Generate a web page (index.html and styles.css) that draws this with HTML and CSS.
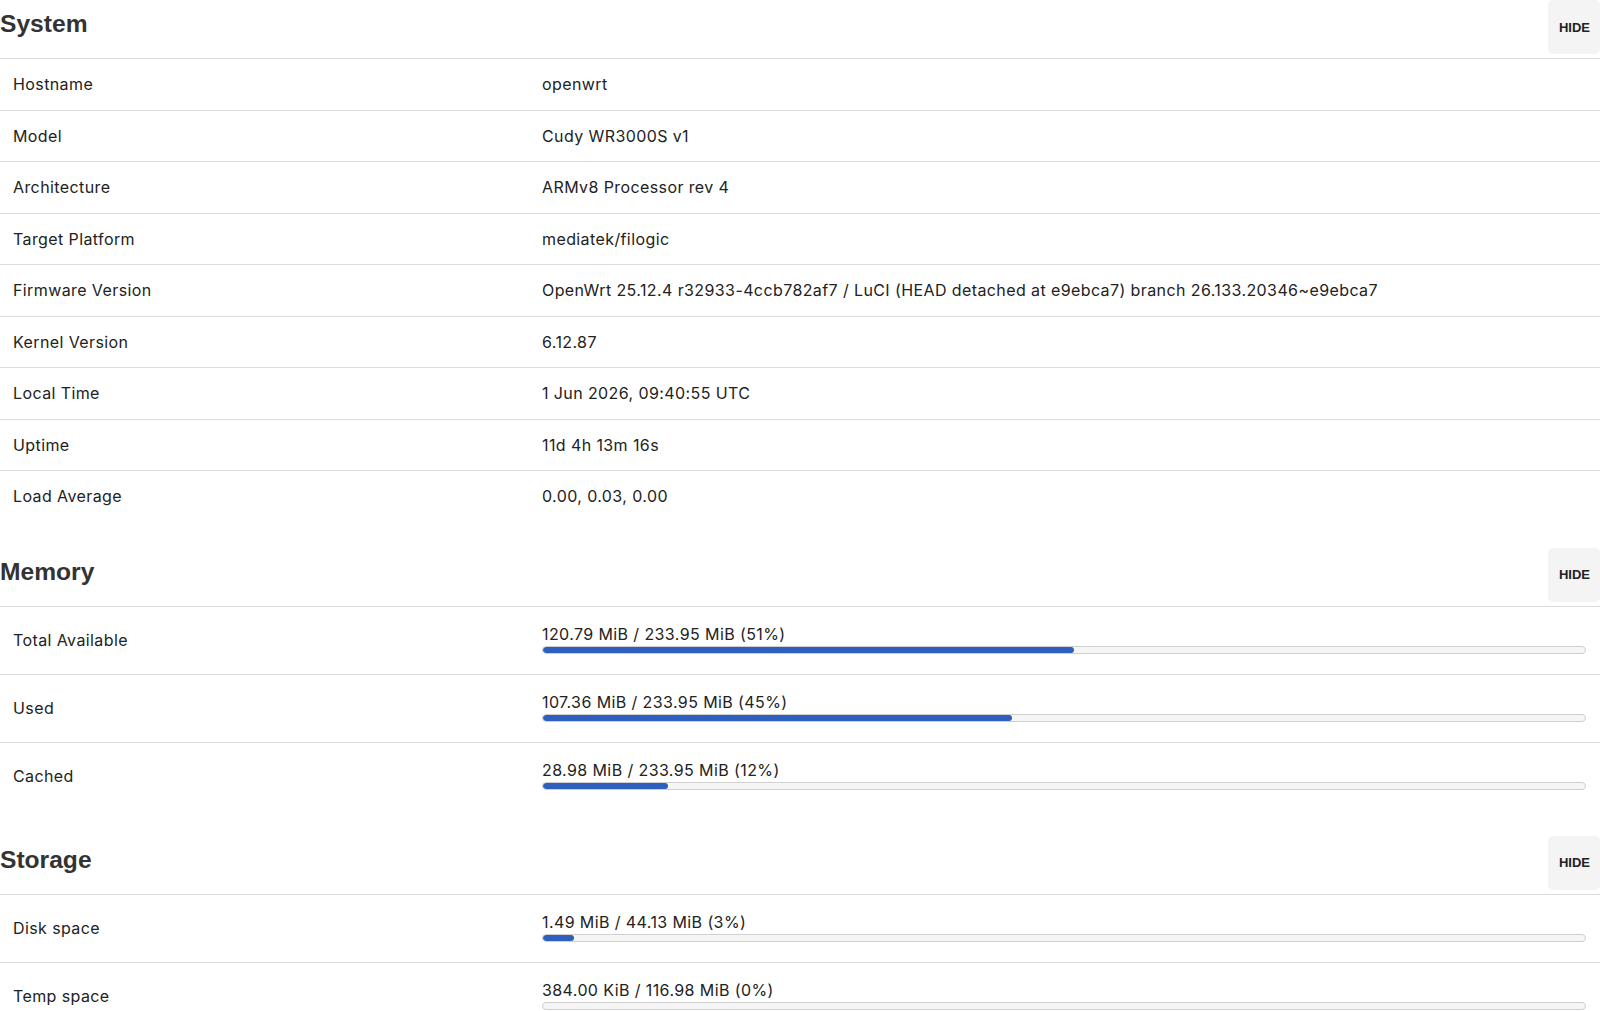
FILE: index.html
```html
<!DOCTYPE html>
<html>
<head>
<meta charset="utf-8">
<title>Status</title>
<link rel="stylesheet" href="styles.css">
</head>
<body>
<div class="page">
  <section class="section">
    <div class="section-head">
      <h2>System</h2>
      <button class="hide-btn">HIDE</button>
    </div>
    <div class="rows">
      <div class="row"><div class="label">Hostname</div><div class="value">openwrt</div></div>
      <div class="row"><div class="label">Model</div><div class="value">Cudy WR3000S v1</div></div>
      <div class="row"><div class="label">Architecture</div><div class="value">ARMv8 Processor rev 4</div></div>
      <div class="row"><div class="label">Target Platform</div><div class="value">mediatek/filogic</div></div>
      <div class="row"><div class="label">Firmware Version</div><div class="value">OpenWrt 25.12.4 r32933-4ccb782af7 / LuCI (HEAD detached at e9ebca7) branch 26.133.20346~e9ebca7</div></div>
      <div class="row"><div class="label">Kernel Version</div><div class="value">6.12.87</div></div>
      <div class="row"><div class="label">Local Time</div><div class="value">1 Jun 2026, 09:40:55 UTC</div></div>
      <div class="row"><div class="label">Uptime</div><div class="value">11d 4h 13m 16s</div></div>
      <div class="row"><div class="label">Load Average</div><div class="value">0.00, 0.03, 0.00</div></div>
    </div>
  </section>

  <section class="section">
    <div class="section-head">
      <h2>Memory</h2>
      <button class="hide-btn">HIDE</button>
    </div>
    <div class="rows">
      <div class="row bar-row"><div class="label">Total Available</div><div class="value"><div class="bar-text">120.79 MiB / 233.95 MiB (51%)</div><div class="track"><div class="fill" style="width:51%"></div></div></div></div>
      <div class="row bar-row"><div class="label">Used</div><div class="value"><div class="bar-text">107.36 MiB / 233.95 MiB (45%)</div><div class="track"><div class="fill" style="width:45%"></div></div></div></div>
      <div class="row bar-row"><div class="label">Cached</div><div class="value"><div class="bar-text">28.98 MiB / 233.95 MiB (12%)</div><div class="track"><div class="fill" style="width:12%"></div></div></div></div>
    </div>
  </section>

  <section class="section">
    <div class="section-head">
      <h2>Storage</h2>
      <button class="hide-btn">HIDE</button>
    </div>
    <div class="rows">
      <div class="row bar-row"><div class="label">Disk space</div><div class="value"><div class="bar-text">1.49 MiB / 44.13 MiB (3%)</div><div class="track"><div class="fill" style="width:3%"></div></div></div></div>
      <div class="row bar-row"><div class="label">Temp space</div><div class="value"><div class="bar-text">384.00 KiB / 116.98 MiB (0%)</div><div class="track"><div class="fill" style="width:0%"></div></div></div></div>
    </div>
  </section>
</div>
</body>
</html>
```

FILE: styles.css
```css
html, body {
  margin: 0;
  padding: 0;
  background: #fff;
}
body {
  font-family: Inter, "Liberation Sans", Arial, sans-serif;
  font-size: 16px;
  letter-spacing: 0.4px;
  color: #222;
}
.page {
  display: flex;
  flex-direction: column;
}
.section + .section {
  margin-top: 26px;
}
.section-head {
  display: flex;
  justify-content: space-between;
  align-items: flex-start;
  padding-bottom: 4px;
  border-bottom: 1px solid #dcdcdc;
}
.section-head h2 {
  margin: 0;
  font-family: "Liberation Sans", Arial, Helvetica, sans-serif;
  font-size: 24.6px;
  font-weight: bold;
  letter-spacing: 0;
  line-height: 47px;
  color: #333;
}
.hide-btn {
  height: 54px;
  padding: 0 10px 0 11px;
  border: none;
  border-radius: 5px;
  background: #f4f4f4;
  color: #222;
  font-family: "Liberation Sans", Arial, Helvetica, sans-serif;
  font-size: 13px;
  font-weight: bold;
  letter-spacing: 0;
}
.rows {
  display: flex;
  flex-direction: column;
}
.row {
  display: grid;
  grid-template-columns: 33% 1fr;
  line-height: 20.5px;
  border-bottom: 1px solid #dcdcdc;
}
.row:last-child {
  border-bottom: none;
}
.label {
  padding: 15px 14px 15px 13px;
  align-self: center;
}
.value {
  padding: 15px 14px;
}
.bar-row .label {
  padding-top: 0;
  padding-bottom: 0;
}
.bar-row .value {
  padding-top: 17px;
  padding-bottom: 19.5px;
}
.bar-text {
  margin-bottom: 2px;
}
.track {
  height: 6px;
  border: 1px solid #cfcfcf;
  border-radius: 4px;
  background: #f6f6f6;
  overflow: hidden;
}
.fill {
  height: 100%;
  background: #2e5fbf;
  border-radius: 3px;
}
```
